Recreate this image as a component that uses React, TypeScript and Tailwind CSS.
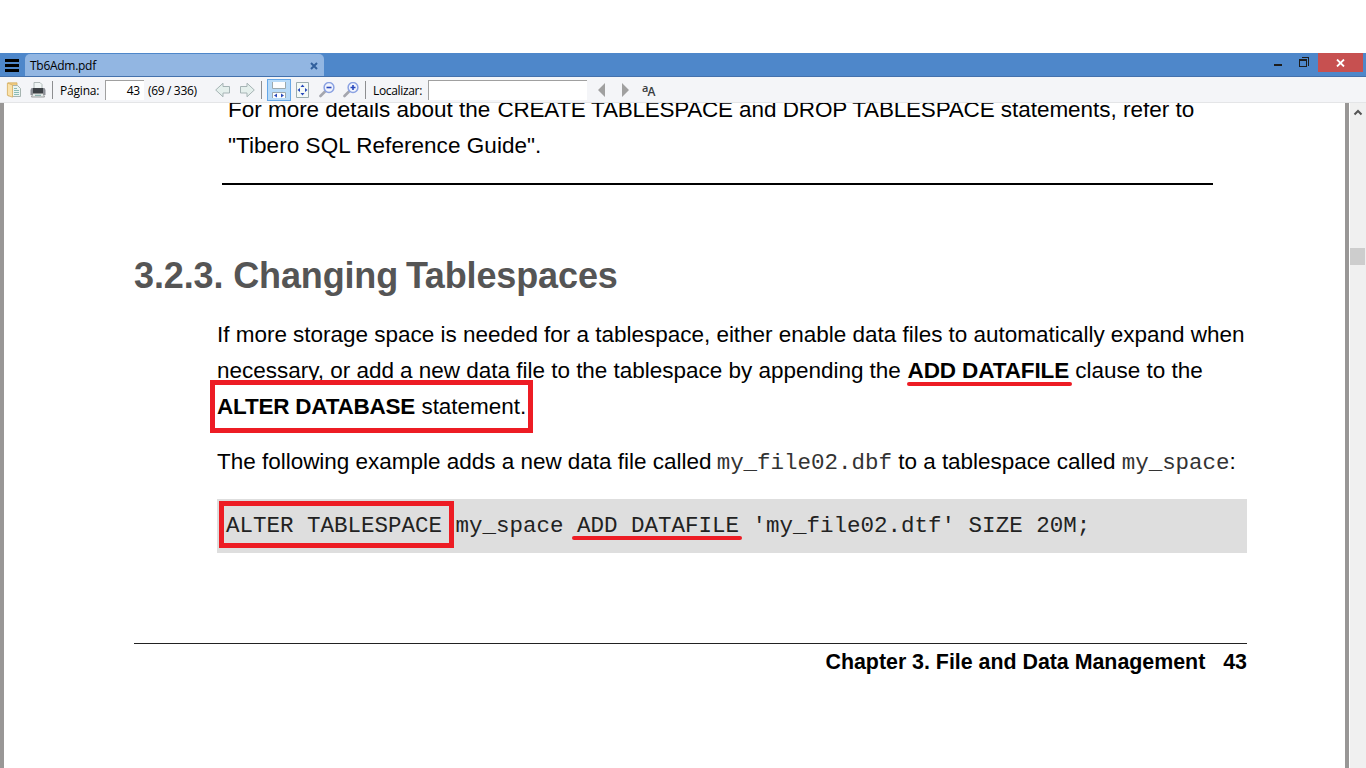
import React from "react";

const ui = "font-['Open_Sans','Noto_Sans',sans-serif] text-[12px] whitespace-nowrap";
const mono = "font-['Liberation_Mono',monospace]";

function TitleBar() {
  return (
    <div className="flex h-6 shrink-0 border-b border-[#4471ac] bg-[#4e87ca]">
      <div className="flex h-[23px] w-[25px] items-center pt-[2px] pl-[5px]">
        <svg width="14" height="13" shapeRendering="crispEdges">
          <path d="M0 0h14v3H0zM0 5h14v3H0zM0 10h14v3H0z" fill="#000" />
        </svg>
      </div>
      <div className="mt-px flex h-[22px] w-[299px] items-center justify-between rounded-t-[5px] bg-[#92b6e2] pt-[2px] pr-[6px] pl-[5px]">
        <span className={`${ui} leading-[20px] tracking-[-0.28px] text-black`}>Tb6Adm.pdf</span>
        <svg width="8" height="8" viewBox="0 0 8 8">
          <path d="M1 1l6 6M7 1l-6 6" stroke="#315f9c" strokeWidth="2" />
        </svg>
      </div>
      <div className="ml-auto flex">
        <svg width="45" height="23" shapeRendering="crispEdges">
          <path d="M1 11h8v2H1z" fill="#1d1d1d" />
          <path d="M28.5 4.5h7v8M26.5 7.500h7v6h-7zM26 6.500h8" fill="none" stroke="#1d1d1d" />
        </svg>
        <div className="mr-[3px] flex h-[19px] w-[45px] items-center justify-center bg-[#c75050]">
          <svg width="9" height="8" viewBox="0 0 9 8">
            <path d="M1 .5l7 7M8 .5l-7 7" stroke="#fff" strokeWidth="1.8" />
          </svg>
        </div>
      </div>
    </div>
  );
}

function Magnifier({ plus }: { plus?: boolean }) {
  return (
    <svg width="16" height="16" viewBox="0 0 16 16">
      <path d="M1.500 14L6 9.500" stroke="#a4a6ae" strokeWidth="2.600" strokeLinecap="round" />
      <circle cx="10" cy="5.500" r="4.900" fill="#f2f5fd" stroke="#8ba2e2" strokeWidth="1.500" />
      <path d={plus ? "M7.500 5.500h5M10 3v5" : "M7.500 5.500h5"} stroke="#2948bc" strokeWidth="1.600" />
    </svg>
  );
}

function Arrow({ right }: { right?: boolean }) {
  return (
    <svg width="16" height="16" viewBox="0 0 16 16" className={right ? "-scale-x-100" : ""}>
      <path d="M.7 8L8 1.200v3.300h6.500v6.500H8v3.800z" fill="#e4efec" stroke="#a5b3b4" strokeLinejoin="round" />
    </svg>
  );
}

function Toolbar() {
  return (
    <div className="flex h-[26px] shrink-0 items-center border-b border-[#e4e5e7] bg-[#f4f5f8]">
      <svg width="16" height="16" viewBox="0 0 16 16" className="ml-[6px]">
        <path d="M2 .8h9v13H2z" fill="#f0cb80" stroke="#d6b064" strokeWidth=".8" />
        <path d="M6 3.500h5.500l3 3v8H6z" fill="#eaf4f1" stroke="#a6b4b0" />
        <path d="M8 6.500h3M8 8.500h5M8 10.500h5M8 12.500h5" stroke="#8bbcb6" />
        <path d="M1.400 1L6.500 3v12.200l-5.100-2z" fill="#fae2ab" stroke="#d6b064" strokeWidth=".8" />
      </svg>
      <svg width="16" height="16" viewBox="0 0 16 16" className="ml-2">
        <path d="M4 .5h6l2 2V7H4z" fill="#f0f5f5" stroke="#a0a9aa" strokeWidth=".8" />
        <path d="M1.500 6h13l1 2v5H.5V8z" fill="#8b8e95" />
        <path d="M3 6h10v5H3z" fill="#3d4146" />
        <path d="M2.800 11.500h10.400l1.300 3.500h-13z" fill="#e4eae9" stroke="#888" strokeWidth=".8" />
        <path d="M5 13.300h6" stroke="#79a3a0" />
      </svg>
      <div className="ml-[6px] h-[18px] w-px bg-[#8d8e90]" />
      <span className={`${ui} ml-[7px] w-[45px] pt-[2px] tracking-[-0.2px]`}>Página:</span>
      <div className={`${ui} mt-px flex h-[20px] w-[39px] items-center justify-end border-t border-l border-[#a0a0a0] bg-white pr-[4px] tracking-[-0.2px]`}>43</div>
      <span className={`${ui} ml-[4px] w-[67px] pt-[2px] tracking-[-0.34px]`}>(69 / 336)</span>
      <Arrow />
      <div className="w-2" />
      <Arrow right />
      <div className="ml-[6px] h-[18px] w-px bg-[#8d8e90]" />
      <div className="ml-[5px] flex h-[22px] w-6 items-center justify-center border border-[#65a7e8] bg-[#b7daf8]">
        <svg width="14" height="18" viewBox="0 0 14 18">
          <path d="M.5 1v6.500h13V1M.5 17v-5.500h13V17" fill="#fdfdfd" stroke="#9ca9ad" />
          <path d="M5 12.500v4L2 14.500zM9 12.500v4l3-2z" fill="#2849ba" />
        </svg>
      </div>
      <svg width="14" height="16" viewBox="0 0 14 16" className="ml-[5px]">
        <path d="M.5.5h12v15H.5z" fill="#f4faf8" stroke="#9cadb0" />
        <path d="M4.500 5L6.500 2.500 8.500 5zM4.500 11l2 2.500 2-2.500zM4 6v4L1.500 8zM9 6v4l2.500-2z" fill="#2849ba" />
      </svg>
      <div className="w-[9px]" />
      <Magnifier />
      <div className="w-2" />
      <Magnifier plus />
      <div className="ml-[6px] h-[18px] w-px bg-[#8d8e90]" />
      <span className={`${ui} ml-[7px] w-[55px] pt-[2px] tracking-[-0.33px]`}>Localizar:</span>
      <div className="mt-px h-[20px] w-[159px] border-t border-l border-[#a0a0a0] bg-white" />
      <svg width="32" height="14" viewBox="0 0 32 14" className="ml-[10px]">
        <path d="M8 0v14L1 7zM25 0v14l7-7z" fill="#a0a0a0" />
      </svg>
      <div className="mt-px ml-[13px] flex h-[14px] w-4 items-end font-['Open_Sans',sans-serif] font-semibold text-[#3a3d40]">
        <span className="mb-[4px] text-[11px] leading-[10px]">a</span>
        <span className="-ml-px text-[12px] leading-[10px]">A</span>
      </div>
    </div>
  );
}

function Page() {
  return (
    <div className="flex w-[1341px] flex-col overflow-hidden bg-white font-['Liberation_Sans',sans-serif] text-[22.5px] leading-9 tracking-[-0.018px] whitespace-nowrap text-black">
      <div className="-mt-[11px] ml-[224px] h-9">
        For more details about the <span className="ml-px tracking-[-0.25px]">CREATE TABLESPACE</span> and{" "}
        <span className="tracking-[-0.2px]">DROP TABLESPACE</span> statements, refer to
      </div>
      <div className="ml-[224px] h-9 tracking-[0.05px]">"Tibero SQL Reference Guide".</div>
      <div className="mt-[19px] ml-[218px] h-[2px] w-[991px] bg-black" />
      <h1 className="mt-[71px] ml-[130px] h-10 text-[36px] leading-10 font-bold tracking-[-0.13px] text-[#555]">
        3.2.3. Changing <span className="-ml-[2px]">T</span><span className="-ml-[3px]">ablespaces</span>
      </h1>
      <div className="mt-[21px] ml-[213px] h-9">If more storage space is needed for a tablespace, either enable data files to automatically expand when</div>
      <div className="ml-[213px] h-9">
        necessary, or add a new data file to the tablespace by appending the{" "}
        <span className="relative ml-[0.5px] font-bold tracking-[-0.12px]">
          ADD DATAFILE
          <span className="absolute -left-[1px] top-[24px] h-1 w-[165px] rounded-full bg-[#ed1c24]" />
        </span>{" "}
        clause to the
      </div>
      <div className="relative ml-[213px] h-9">
        <b className="tracking-[-0.22px]">ALTER DATABASE</b> statement.
        <span className="absolute -top-[9px] -left-[7px] h-[53px] w-[323px] border-5 border-[#ed1c24]" />
      </div>
      <div className="mt-[19px] ml-[213px] h-9">
        The following example adds a new data file called <span className={`${mono} -ml-px text-[#333]`}>my_file02.dbf</span> to a tablespace called{" "}
        <span className={`${mono} text-[#333]`}>my_space</span>:
      </div>
      <div className={`${mono} relative mt-[19px] ml-[213px] h-[54px] w-[1030px] shrink-0 bg-[#dedede] pl-[9px] leading-[54px] tracking-normal text-[#222]`}>
        ALTER TABLESPACE my_space ADD DATAFILE 'my_file02.dtf' SIZE 20M;
        <span className="absolute top-[2px] left-[2px] h-[47px] w-[235px] border-5 border-[#ed1c24]" />
        <span className="absolute top-[37px] left-[355px] h-1 w-[170px] rounded-full bg-[#ed1c24]" />
      </div>
      <div className="mt-[90px] ml-[130px] flex h-9 w-[1113px] justify-end border-t border-[#222] text-[21.4px] font-bold">
        <span>Chapter 3. File and Data Management</span>
        <span className="ml-[18px]">43</span>
      </div>
    </div>
  );
}

export default function App() {
  return (
    <div className="flex h-screen w-full flex-col overflow-hidden bg-white pt-[53px]">
      <TitleBar />
      <Toolbar />
      <div className="flex min-h-0 flex-1">
        <div className="w-1 shrink-0 bg-[#999796]" />
        <Page />
        <div className="w-1 shrink-0 bg-[#999796]" />
        <div className="flex w-[17px] shrink-0 flex-col items-start border-l border-white bg-[#f0f0f0]">
          <svg width="16" height="17" viewBox="0 0 16 17">
            <path d="M4.500 11.500L8 8l3.500 3.500" fill="none" stroke="#555" strokeWidth="2" />
          </svg>
          <div className="mt-32 h-[17px] w-[15px] bg-[#cdcdcd]" />
        </div>
      </div>
    </div>
  );
}
